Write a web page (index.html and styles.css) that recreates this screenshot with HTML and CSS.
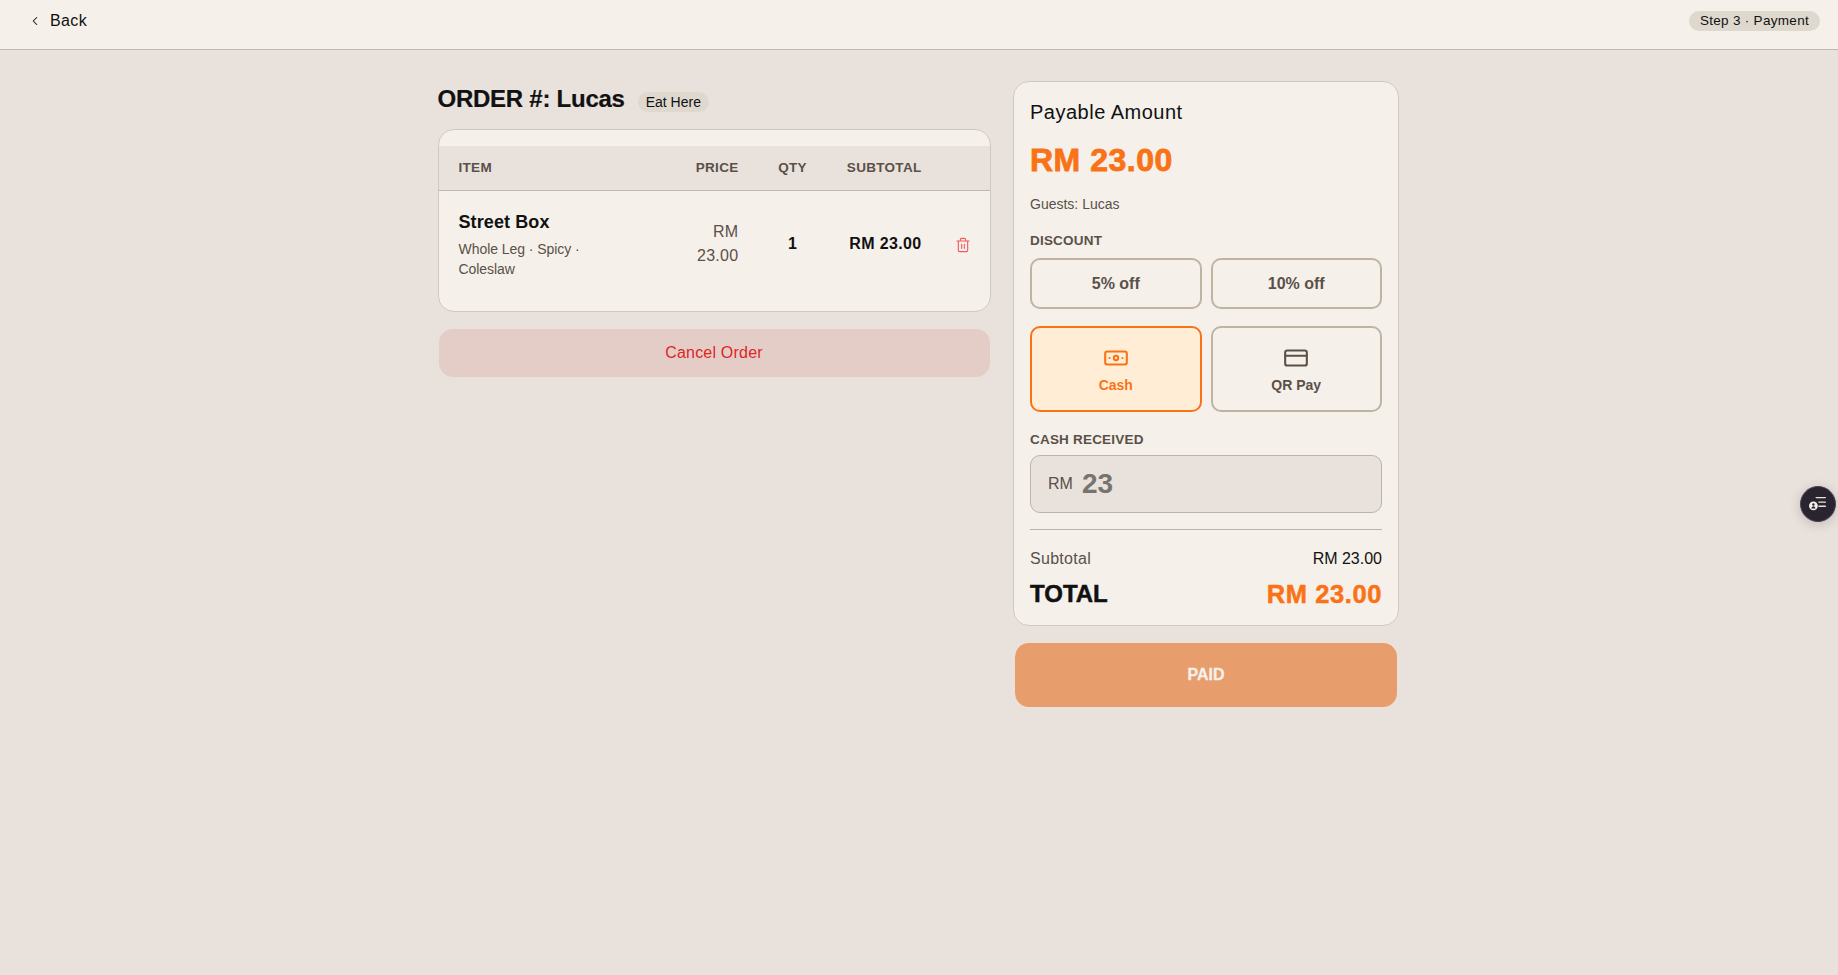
FILE: index.html
```html
<!DOCTYPE html>
<html lang="en">
<head>
<meta charset="utf-8">
<title>Payment</title>
<link rel="stylesheet" href="styles.css">
</head>
<body>
<header class="topbar">
  <a class="back">
    <svg class="back-icon" viewBox="0 0 24 24"><path d="M15 6l-6 6 6 6"/></svg>
    <span>Back</span>
  </a>
  <span class="step-pill">Step 3 · Payment</span>
</header>
<main class="layout">
  <section class="order">
    <div class="order-head">
      <h1>ORDER #: Lucas</h1>
      <span class="type-pill">Eat Here</span>
    </div>
    <div class="table-card">
      <table>
        <colgroup>
          <col class="c-item"><col class="c-price"><col class="c-qty"><col class="c-sub"><col class="c-del">
        </colgroup>
        <thead>
          <tr><th class="left">ITEM</th><th>PRICE</th><th class="center">QTY</th><th>SUBTOTAL</th><th></th></tr>
        </thead>
        <tbody>
          <tr>
            <td class="left">
              <div class="item-name">Street Box</div>
              <div class="item-desc">Whole Leg · Spicy · Coleslaw</div>
            </td>
            <td class="price">RM 23.00</td>
            <td class="center strong">1</td>
            <td class="strong">RM 23.00</td>
            <td class="center">
              <svg class="trash" viewBox="0 0 24 24"><path d="M3 6h18M19 6v14a2 2 0 0 1-2 2H7a2 2 0 0 1-2-2V6M8 6V4a2 2 0 0 1 2-2h4a2 2 0 0 1 2 2v2M10 11v6M14 11v6"/></svg>
            </td>
          </tr>
        </tbody>
      </table>
    </div>
    <button class="cancel">Cancel Order</button>
  </section>
  <aside class="pay">
    <div class="pay-card">
      <div class="pay-title">Payable Amount</div>
      <div class="pay-amount">RM 23.00</div>
      <div class="guests">Guests: Lucas</div>
      <div class="label label-discount">DISCOUNT</div>
      <div class="two discount-row">
        <button class="opt disc">5% off</button>
        <button class="opt disc">10% off</button>
      </div>
      <div class="two method-row">
        <button class="opt method active">
          <svg class="m-icon" viewBox="0 0 24 24"><rect x="2" y="6" width="20" height="12" rx="2"/><circle cx="12" cy="12" r="2"/><path d="M6 12h.01M18 12h.01"/></svg>
          <span>Cash</span>
        </button>
        <button class="opt method">
          <svg class="m-icon" viewBox="0 0 24 24"><rect x="2" y="5" width="20" height="14" rx="2"/><path d="M2 10h20"/></svg>
          <span>QR Pay</span>
        </button>
      </div>
      <div class="label label-cash">CASH RECEIVED</div>
      <div class="cash-input"><span class="cash-rm">RM</span><span class="cash-val">23</span></div>
      <div class="divider"></div>
      <div class="sum-row"><span class="sum-l">Subtotal</span><span class="sum-r">RM 23.00</span></div>
      <div class="total-row"><span>TOTAL</span><span class="total-val">RM 23.00</span></div>
    </div>
    <button class="paid">PAID</button>
  </aside>
</main>
<button class="widget" aria-label="Tasks">
  <svg viewBox="0 0 24 24"><path d="M10 5h10M13 10h7M13 14.500h7"/><circle cx="7" cy="14" r="4.800" fill="#f5f0ea" stroke="none"/><path d="M4.800 17c.3-1.700 1.100-2.600 2.200-2.600s1.900.9 2.200 2.600z" fill="#2a2430" stroke="none"/><circle cx="7" cy="12.600" r="1.300" fill="#2a2430" stroke="none"/></svg>
</button>
</body>
</html>
```
FILE: styles.css
```css
* { box-sizing: border-box; }
html, body { margin: 0; height: 100%; }
body {
  background: #e9e2dc;
  color: #111;
  font-family: "Liberation Sans", Arial, sans-serif;
  font-size: 16px;
  min-height: 975px;
  overflow: hidden;
}
button { font-family: inherit; cursor: pointer; }

.topbar {
  height: 50px;
  background: #f5f0ea;
  border-bottom: 1px solid #c4b8a9;
  display: flex;
  align-items: center;
  justify-content: space-between;
  padding: 0 18px 0 28px;
}
.back { display: flex; align-items: center; gap: 8px; font-size: 16px; letter-spacing: 0.4px; margin-top: -7px; }
.back-icon { width: 14px; height: 14px; fill: none; stroke: #111; stroke-width: 1.800; stroke-linecap: round; stroke-linejoin: round; }
.step-pill {
  background: #dfd8cf;
  border-radius: 10px;
  height: 20px;
  line-height: 20px;
  padding: 0 11px;
  font-size: 13.500px;
  margin-top: -7px;
  letter-spacing: 0.3px;
}

.layout {
  width: 963px;
  margin: 0 auto;
  padding-top: 31px;
  display: flex;
  gap: 22.500px;
  align-items: flex-start;
}
.order { width: 553px; }
.order-head { display: flex; align-items: center; gap: 13px; height: 34px; }
.order-head h1 { margin: 2px 0 0; font-size: 24px; font-weight: 700; line-height: 34px; letter-spacing: -0.25px; -webkit-text-stroke: 0.2px #111; }
.type-pill {
  background: #dfd8cf;
  border-radius: 10px;
  height: 20px;
  line-height: 20px;
  padding: 0 8px;
  font-size: 14px;
  margin-top: 8px;
}
.table-card {
  margin-top: 14px;
  background: #f5f0ea;
  border: 1px solid #d2c9be;
  border-radius: 16px;
  padding: 16px 0 14px;
  overflow: hidden;
}
table { width: 100%; border-collapse: collapse; table-layout: fixed; }
.c-item { width: 220px; }
.c-price { width: 100px; }
.c-qty { width: 68px; }
.c-sub { width: 115px; }
.c-del { width: 49px; }
th {
  height: 44px;
  background: #e9e2dc;
  border-bottom: 1px solid #c4b8a9;
  color: #5a5048;
  font-size: 13.500px;
  font-weight: 700;
  text-align: right;
  padding: 0 20px;
  letter-spacing: 0.3px;
  white-space: nowrap;
}
td { padding: 18px 20px; text-align: right; vertical-align: middle; white-space: normal; }
th.left, td.left { text-align: left; }
th.center, td.center { text-align: center; }
th.center { padding: 0; }
td.center { padding-left: 0; padding-right: 0; }
.item-name { font-size: 18px; font-weight: 700; line-height: 26px; letter-spacing: 0.1px; }
.item-desc { font-size: 14px; line-height: 20.300px; color: #5a5048; margin-top: 4px; max-width: 130px; letter-spacing: -0.05px; }
.price { color: #5a5048; line-height: 24px; letter-spacing: 0.3px; }
.strong { font-weight: 700; white-space: nowrap; padding-left: 0; letter-spacing: 0.35px; }
.trash { width: 16px; height: 16px; margin-right: 6px; fill: none; stroke: #ef5a60; stroke-width: 1.700; stroke-linecap: round; stroke-linejoin: round; vertical-align: middle; }

.cancel {
  display: block;
  width: 551px;
  height: 48px;
  margin: 17px 1px 0;
  background: #e5cdc7;
  border: 0;
  border-radius: 14px;
  color: #dc2626;
  font-size: 16px;
  letter-spacing: 0.2px;
}

.pay { width: 386px; }
.pay-card {
  background: #f5f0ea;
  border: 1px solid #d2c9be;
  border-radius: 16px;
  padding: 16px 16px 15px;
}
.pay-title { font-size: 20px; line-height: 28px; letter-spacing: 0.5px; }
.pay-amount { font-size: 32px; line-height: 40px; margin-top: 14px; color: #f97316; font-weight: 700; -webkit-text-stroke: 0.8px #f97316; letter-spacing: 0.5px; }
.guests { font-size: 14px; line-height: 20px; margin-top: 14px; color: #5a5048; }
.label { font-size: 13.500px; line-height: 18px; font-weight: 700; color: #5a5048; letter-spacing: 0.2px; }
.label-discount { margin-top: 18px; }
.two { display: grid; grid-template-columns: 1fr 1fr; gap: 9px; }
.discount-row { margin-top: 8px; }
.method-row { margin-top: 17px; }
.opt {
  background: #f5f0ea;
  border: 2px solid #bfb3a4;
  border-radius: 10px;
  color: #5a5048;
  padding: 0;
}
.disc { height: 51px; font-size: 16px; font-weight: 700; }
.method {
  height: 86px;
  font-size: 14px;
  font-weight: 700;
  display: flex;
  flex-direction: column;
  align-items: center;
  justify-content: center;
  gap: 6px;
}
.method.active { background: #ffedd5; border-color: #f97316; color: #f97316; }
.m-icon { width: 26px; height: 26px; fill: none; stroke: currentColor; stroke-width: 1.900; stroke-linecap: round; stroke-linejoin: round; }
.label-cash { margin-top: 19px; }
.cash-input {
  margin-top: 6px;
  height: 58px;
  background: #e9e2dc;
  border: 1px solid #bfb3a4;
  border-radius: 10px;
  display: flex;
  align-items: center;
  gap: 9px;
  padding-left: 17px;
}
.cash-rm { font-size: 16px; color: #5a5048; }
.cash-val { font-size: 28px; font-weight: 700; color: #77736f; }
.divider { height: 1px; background: #bfb3a4; margin-top: 16px; }
.sum-row { display: flex; justify-content: space-between; line-height: 24px; margin-top: 17px; }
.sum-l { color: #5a5048; letter-spacing: 0.3px; }
.total-row {
  display: flex;
  justify-content: space-between;
  line-height: 32px;
  margin-top: 7px;
  font-size: 24px;
  font-weight: 700;
  -webkit-text-stroke: 0.5px currentColor;
}
.total-val { color: #f97316; font-size: 25.500px; letter-spacing: 0.6px; }

.paid {
  display: block;
  width: 382px;
  height: 64px;
  margin: 17px 2px 0;
  background: #e89d6c;
  border: 0;
  border-radius: 14px;
  color: #f5f0ea;
  font-size: 16px;
  font-weight: 700;
  -webkit-text-stroke: 0.3px #f5f0ea;
}

.widget {
  position: fixed;
  left: 1800px;
  top: 486px;
  width: 36px;
  height: 36px;
  border-radius: 50%;
  background: #2a2430;
  border: 1px solid #4a4450;
  box-shadow: 0 2px 12px rgba(0, 0, 0, 0.18);
  padding: 6px;
}
.widget svg { display: block; width: 100%; height: 100%; fill: none; stroke: #e9e2dc; stroke-width: 1.500; stroke-linecap: round; }
```
